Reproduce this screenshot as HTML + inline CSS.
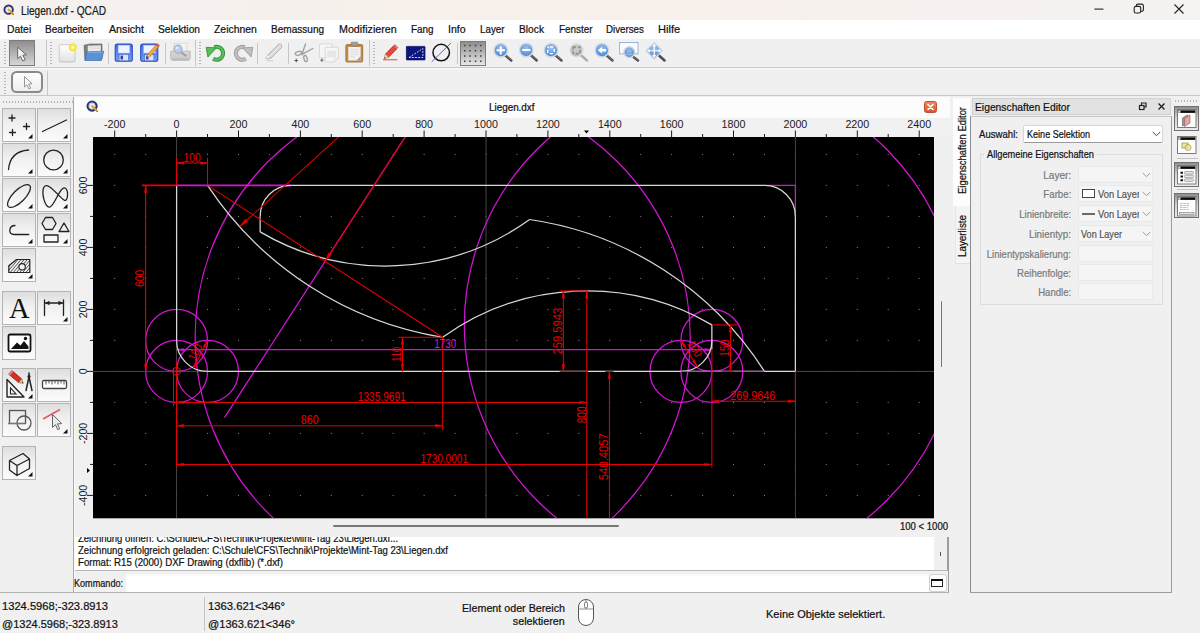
<!DOCTYPE html>
<html lang="de"><head><meta charset="utf-8"><title>Liegen.dxf - QCAD</title>
<style>
html,body{margin:0;padding:0}
body{width:1200px;height:633px;overflow:hidden;background:#f0f0f0;position:relative;font-family:"Liberation Sans",sans-serif;}
.t{position:absolute;white-space:nowrap;line-height:1;-webkit-text-stroke:0.22px currentColor;}
.b{position:absolute;box-sizing:border-box}
svg{position:absolute;overflow:visible}
svg text{font-family:"Liberation Sans",sans-serif}

.tb{background:#f0f0f0}
.btn{position:absolute;box-sizing:border-box;border:1px solid #b4b4b4;background:linear-gradient(#dedede,#f0f0f0 45%,#fbfbfb);}
.btn.on{background:linear-gradient(#c8c8c8,#f2f2f2);border-color:#8a8a8a}
.fld{position:absolute;box-sizing:border-box;border:1px solid #e9e9e9;background:#f5f5f5}

</style></head><body>
<div class="b" style="left:0px;top:0px;width:1200px;height:20px;background:linear-gradient(90deg,#f4f1ef,#f8f0ea 45%,#f5f2f1)"></div>
<span class="t " style="left:21.0px;transform-origin:left top;transform:scaleX(0.844);top:5.0px;font-size:12px;color:#1a1a1a;">Liegen.dxf - QCAD</span>
<svg style="left:1090px;top:0px" width="110" height="20" viewBox="0 0 110 20"><g fill="none" stroke="#222" stroke-width="1.1"><path d="M4.400 9.100h9"/><rect x="44.200" y="6.400" width="6.500" height="6.600" rx="1.600"/><path d="M46.300 6.300v-0.600a1.600 1.600 0 0 1 1.600 -1.600h3.600a1.900 1.900 0 0 1 1.900 1.900v3.700a1.600 1.600 0 0 1 -1.600 1.600h-0.900"/><path d="M84.500 4.500l9 9M93.500 4.500l-9 9"/></g></svg>
<div class="b" style="left:0px;top:20px;width:1200px;height:19px;background:#fff"></div>
<span class="t " style="left:7.3px;transform-origin:left top;transform:scaleX(0.942);top:23.9px;font-size:11px;color:#111;">Datei</span>
<span class="t " style="left:45.2px;transform-origin:left top;transform:scaleX(0.915);top:23.9px;font-size:11px;color:#111;">Bearbeiten</span>
<span class="t " style="left:108.5px;transform-origin:left top;transform:scaleX(0.970);top:23.9px;font-size:11px;color:#111;">Ansicht</span>
<span class="t " style="left:157.5px;transform-origin:left top;transform:scaleX(0.928);top:23.9px;font-size:11px;color:#111;">Selektion</span>
<span class="t " style="left:213.8px;transform-origin:left top;transform:scaleX(0.948);top:23.9px;font-size:11px;color:#111;">Zeichnen</span>
<span class="t " style="left:271.2px;transform-origin:left top;transform:scaleX(0.914);top:23.9px;font-size:11px;color:#111;">Bemassung</span>
<span class="t " style="left:338.6px;transform-origin:left top;transform:scaleX(0.973);top:23.9px;font-size:11px;color:#111;">Modifizieren</span>
<span class="t " style="left:410.8px;transform-origin:left top;transform:scaleX(0.897);top:23.9px;font-size:11px;color:#111;">Fang</span>
<span class="t " style="left:448.1px;transform-origin:left top;transform:scaleX(0.959);top:23.9px;font-size:11px;color:#111;">Info</span>
<span class="t " style="left:480.2px;transform-origin:left top;transform:scaleX(0.894);top:23.9px;font-size:11px;color:#111;">Layer</span>
<span class="t " style="left:519.0px;transform-origin:left top;transform:scaleX(0.929);top:23.9px;font-size:11px;color:#111;">Block</span>
<span class="t " style="left:558.5px;transform-origin:left top;transform:scaleX(0.901);top:23.9px;font-size:11px;color:#111;">Fenster</span>
<span class="t " style="left:606.0px;transform-origin:left top;transform:scaleX(0.886);top:23.9px;font-size:11px;color:#111;">Diverses</span>
<span class="t " style="left:657.8px;transform-origin:left top;transform:scaleX(1.009);top:23.9px;font-size:11px;color:#111;">Hilfe</span>
<div class="b" style="left:0px;top:39px;width:1200px;height:28.8px;background:#f0f0f0;border-bottom:1px solid #c8c8c8"></div>
<div class="b" style="left:0px;top:67.8px;width:1200px;height:28.7px;background:#f0f0f0;border-top:1px solid #fafafa;border-bottom:1px solid #c8c8c8"></div>
<div class="b" style="left:73px;top:96.5px;width:1px;height:496px;background:#a9a9a9"></div>
<div class="b" style="left:74px;top:98px;width:1px;height:495px;background:#fafafa"></div>
<div class="b" style="left:75px;top:97px;width:876px;height:439px;background:#f0f0f0"></div>
<div class="b" style="left:75px;top:97px;width:875px;height:21px;background:#fcfcfc"></div>
<span class="t " style="left:489.3px;transform-origin:left top;transform:scaleX(0.986);top:103.3px;font-size:10px;color:#111;">Liegen.dxf</span>
<div class="b" style="left:75px;top:118px;width:875px;height:19px;background:#f1f1f1"></div>
<div class="b" style="left:75px;top:118px;width:18px;height:400px;background:#f1f1f1"></div>
<div class="b" style="left:76px;top:518px;width:874px;height:18px;background:#f0f0f0"></div>
<div class="b" style="left:333px;top:525.2px;width:286px;height:1.6px;background:#777;border-radius:1px"></div>
<div class="b" style="left:940.5px;top:301px;width:1.6px;height:66px;background:#777;border-radius:1px"></div>
<span class="t " style="left:900.0px;transform-origin:left top;transform:scaleX(0.954);top:521.5px;font-size:10px;color:#111;">100 &lt; 1000</span>
<div class="b" style="left:75px;top:537px;width:859px;height:34px;background:#fff"></div>
<div class="b" style="left:934px;top:537px;width:14px;height:34px;background:#f0f0f0;border-right:1px solid #a0a0a0"></div>
<div class="b" style="left:940px;top:552px;width:1px;height:4px;background:#555"></div>
<div class="b" style="left:75px;top:570.4px;width:873px;height:1px;background:#b8b8b8"></div>
<div class="b" style="left:75px;top:537px;width:859px;height:34px;overflow:hidden"><span class="t " style="left:3.0px;transform-origin:left top;transform:scaleX(0.904);top:-4.3px;font-size:10.5px;color:#111;">Zeichnung öffnen: C:\Schule\CFS\Technik\Projekte\Mint-Tag 23\Liegen.dxf...</span></div>
<span class="t " style="left:78.0px;transform-origin:left top;transform:scaleX(0.912);top:544.6px;font-size:10.5px;color:#111;">Zeichnung erfolgreich geladen: C:\Schule\CFS\Technik\Projekte\Mint-Tag 23\Liegen.dxf</span>
<span class="t " style="left:78.0px;transform-origin:left top;transform:scaleX(0.922);top:556.6px;font-size:10.5px;color:#111;">Format: R15 (2000) DXF Drawing (dxflib) (*.dxf)</span>
<span class="t " style="left:74.0px;transform-origin:left top;transform:scaleX(0.866);top:578.1px;font-size:10.5px;color:#111;">Kommando:</span>
<div class="b" style="left:126px;top:574px;width:803px;height:17.5px;background:linear-gradient(#f6f6f6,#fff 3px)"></div>
<div class="b" style="left:929px;top:574px;width:17.5px;height:18px;background:#fdfdfd;border:1px solid #d0d0d0;border-radius:3px"></div>
<div class="b" style="left:931.3px;top:579px;width:12px;height:8px;border:1px solid #222;border-top:2.500px solid #111;background:#fff"></div>
<div class="b" style="left:947.5px;top:537px;width:1.5px;height:56px;background:#9c9c9c"></div>
<div class="b" style="left:0px;top:592.3px;width:949px;height:1.2px;background:#b0b0b0"></div>
<div class="b" style="left:0px;top:595px;width:1200px;height:38px;background:#f0f0f0"></div>
<span class="t " style="left:2.0px;transform-origin:left top;transform:scaleX(1.013);top:600.7px;font-size:11px;color:#111;">1324.5968;-323.8913</span>
<span class="t " style="left:2.0px;transform-origin:left top;top:618.7px;font-size:11px;color:#111;">@1324.5968;-323.8913</span>
<div class="b" style="left:204px;top:597px;width:1px;height:34px;background:#c4c4c4"></div>
<span class="t " style="left:208.0px;transform-origin:left top;transform:scaleX(1.026);top:600.7px;font-size:11px;color:#111;">1363.621&lt;346°</span>
<span class="t " style="left:208.0px;transform-origin:left top;transform:scaleX(1.009);top:618.7px;font-size:11px;color:#111;">@1363.621&lt;346°</span>
<span class="t " style="right:635.0px;transform-origin:right top;transform:scaleX(1.020);top:602.6px;font-size:10.5px;color:#111;">Element oder Bereich</span>
<span class="t " style="right:635.0px;transform-origin:right top;transform:scaleX(1.024);top:615.6px;font-size:10.5px;color:#111;">selektieren</span>
<svg style="left:577px;top:598px" width="18" height="30" viewBox="0 0 18 30"><rect x="1.5" y="1.5" width="15" height="26" rx="7.5" fill="#fff" stroke="#555" stroke-width="1"/><path d="M9 2v9M1.5 11h15" stroke="#777" fill="none" stroke-width="0.8"/><rect x="7.5" y="4" width="3" height="6" rx="1.5" fill="#fff" stroke="#555" stroke-width="0.8"/></svg>
<span class="t " style="left:766.0px;transform-origin:left top;top:608.7px;font-size:11px;color:#111;">Keine Objekte selektiert.</span>
<div class="b" style="left:953.4px;top:98px;width:17px;height:107.5px;background:#fdfdfd"></div>
<div class="b" style="left:955px;top:206px;width:15.5px;height:57.5px;background:#f4f4f4;border-bottom:1px solid #e0e0e0;border-left:1px solid #e6e6e6"></div>
<span class="t" style="left:956.500px;top:194px;font-size:10.5px;color:#111;transform-origin:left top;transform:rotate(-90deg) scaleX(0.898)">Eigenschaften Editor</span>
<span class="t" style="left:956.500px;top:257px;font-size:10.5px;color:#111;transform-origin:left top;transform:rotate(-90deg) scaleX(0.935)">Layerliste</span>
<div class="b" style="left:972px;top:98px;width:199px;height:17px;background:#e2e2e2;border:1px solid #d2d2d2"></div>
<span class="t " style="left:975.0px;transform-origin:left top;transform:scaleX(0.936);top:101.7px;font-size:11px;color:#111;">Eigenschaften Editor</span>
<svg style="left:1138px;top:101px" width="30" height="11" viewBox="0 0 30 11"><g fill="none" stroke="#222" stroke-width="1.2"><rect x="1.5" y="4.5" width="4.5" height="4"/><path d="M3.5 4v-2h4.5v4h-2"/><path d="M20.5 2.5l6 6M26.5 2.5l-6 6" stroke-width="1.4"/></g></svg>
<div class="b" style="left:970px;top:116px;width:202px;height:477.3px;border:1px solid #9c9c9c;border-left:1.500px solid #8c8c8c;border-top-color:#c8c8c8;background:#f0f0f0"></div>
<span class="t " style="left:979.0px;transform-origin:left top;transform:scaleX(0.915);top:129.1px;font-size:10.5px;color:#111;">Auswahl:</span>
<div class="b" style="left:1023px;top:125px;width:140px;height:18px;background:#fff;border:1px solid #d6d6d6;border-bottom-color:#9a9a9a;border-radius:2px"></div>
<span class="t " style="left:1027.0px;transform-origin:left top;transform:scaleX(0.863);top:129.1px;font-size:10.5px;color:#111;">Keine Selektion</span>
<svg style="left:1152px;top:131px" width="9" height="6" viewBox="0 0 9 6"><path d="M0.8 1l3.7 3.7L8.2 1" fill="none" stroke="#444" stroke-width="1"/></svg>
<div class="b" style="left:980px;top:154px;width:183px;height:151px;border:1px solid #dcdcdc"></div>
<div class="b" style="left:984px;top:148px;width:113px;height:12px;background:#f0f0f0"></div>
<span class="t " style="left:987.0px;transform-origin:left top;transform:scaleX(0.881);top:149.1px;font-size:10.5px;color:#111;">Allgemeine Eigenschaften</span>
<span class="t " style="right:129.0px;transform-origin:right top;transform:scaleX(0.959);top:170.1px;font-size:10.5px;color:#7a7a7a;">Layer:</span>
<div class="fld" style="left:1078px;top:166px;width:75px;height:17px"></div>
<svg style="left:1142px;top:172px" width="9" height="6" viewBox="0 0 9 6"><path d="M0.8 1l3.7 3.7L8.2 1" fill="none" stroke="#9a9a9a" stroke-width="1"/></svg>
<span class="t " style="right:129.0px;transform-origin:right top;transform:scaleX(0.923);top:189.1px;font-size:10.5px;color:#7a7a7a;">Farbe:</span>
<div class="fld" style="left:1078px;top:185px;width:75px;height:17px"></div>
<svg style="left:1142px;top:191px" width="9" height="6" viewBox="0 0 9 6"><path d="M0.8 1l3.7 3.7L8.2 1" fill="none" stroke="#9a9a9a" stroke-width="1"/></svg>
<span class="t " style="right:129.0px;transform-origin:right top;transform:scaleX(0.909);top:209.1px;font-size:10.5px;color:#7a7a7a;">Linienbreite:</span>
<div class="fld" style="left:1078px;top:205px;width:75px;height:17px"></div>
<svg style="left:1142px;top:211px" width="9" height="6" viewBox="0 0 9 6"><path d="M0.8 1l3.7 3.7L8.2 1" fill="none" stroke="#9a9a9a" stroke-width="1"/></svg>
<span class="t " style="right:129.0px;transform-origin:right top;transform:scaleX(0.934);top:229.1px;font-size:10.5px;color:#7a7a7a;">Linientyp:</span>
<div class="fld" style="left:1078px;top:225px;width:75px;height:17px"></div>
<svg style="left:1142px;top:231px" width="9" height="6" viewBox="0 0 9 6"><path d="M0.8 1l3.7 3.7L8.2 1" fill="none" stroke="#9a9a9a" stroke-width="1"/></svg>
<span class="t " style="right:129.0px;transform-origin:right top;transform:scaleX(0.905);top:249.1px;font-size:10.5px;color:#7a7a7a;">Linientypskalierung:</span>
<div class="fld" style="left:1078px;top:245px;width:75px;height:17px"></div>
<span class="t " style="right:129.0px;transform-origin:right top;transform:scaleX(0.916);top:268.1px;font-size:10.5px;color:#7a7a7a;">Reihenfolge:</span>
<div class="fld" style="left:1078px;top:264px;width:75px;height:17px"></div>
<span class="t " style="right:129.0px;transform-origin:right top;transform:scaleX(0.912);top:287.1px;font-size:10.5px;color:#7a7a7a;">Handle:</span>
<div class="fld" style="left:1078px;top:283px;width:75px;height:17px"></div>
<div class="b" style="left:1082px;top:189px;width:13px;height:9px;border:1px solid #444;background:#fff"></div>
<span class="t " style="left:1098.0px;transform-origin:left top;transform:scaleX(0.888);top:189.1px;font-size:10.5px;color:#555;">Von Layer</span>
<div class="b" style="left:1138.5px;top:187px;width:3px;height:13px;background:#f5f5f5"></div>
<div class="b" style="left:1082px;top:213px;width:13px;height:2px;background:#6a6a6a"></div>
<span class="t " style="left:1098.0px;transform-origin:left top;transform:scaleX(0.888);top:209.1px;font-size:10.5px;color:#555;">Von Layer</span>
<div class="b" style="left:1138.5px;top:207px;width:3px;height:13px;background:#f5f5f5"></div>
<span class="t " style="left:1081.0px;transform-origin:left top;transform:scaleX(0.867);top:229.1px;font-size:10.5px;color:#555;">Von Layer</span>
<svg style="left:0;top:0" width="1200" height="633" viewBox="0 0 1200 633">
<defs><clipPath id="cc"><rect x="93" y="137" width="841" height="381.29999999999995"/></clipPath><pattern id="grid" x="-133.30" y="60.90" width="30.940" height="31" patternUnits="userSpaceOnUse"><rect x="0" y="0" width="1" height="1" fill="#8a8a8a"/></pattern></defs>
<rect x="93" y="137" width="841" height="381.29999999999995" fill="#000"/>
<g clip-path="url(#cc)" fill="none" stroke-linecap="butt">
<rect x="93" y="137" width="841" height="381.29999999999995" fill="url(#grid)"/>
<path d="M176.60 137V518.3" stroke="#474747" stroke-width="1"/>
<path d="M486.00 137V518.3" stroke="#474747" stroke-width="1"/>
<path d="M795.40 137V518.3" stroke="#474747" stroke-width="1"/>
<path d="M93 371.4H934" stroke="#474747" stroke-width="1"/>
<ellipse cx="442.68" cy="337.30" rx="247.52" ry="248.00" stroke="#d414d4" stroke-width="1.25"/>
<ellipse cx="711.86" cy="324.90" rx="247.52" ry="248.00" stroke="#d414d4" stroke-width="1.25"/>
<ellipse cx="176.60" cy="340.40" rx="30.94" ry="31.00" stroke="#d414d4" stroke-width="1.25"/>
<ellipse cx="176.60" cy="371.40" rx="30.94" ry="31.00" stroke="#d414d4" stroke-width="1.25"/>
<ellipse cx="207.54" cy="371.40" rx="30.94" ry="31.00" stroke="#d414d4" stroke-width="1.25"/>
<ellipse cx="711.86" cy="340.40" rx="30.94" ry="31.00" stroke="#d414d4" stroke-width="1.25"/>
<ellipse cx="711.86" cy="371.40" rx="30.94" ry="31.00" stroke="#d414d4" stroke-width="1.25"/>
<ellipse cx="680.92" cy="371.40" rx="30.94" ry="31.00" stroke="#d414d4" stroke-width="1.25"/>
<path d="M176.60 185.40L291.08 185.40" stroke="#d414d4" stroke-width="1.7"/>
<path d="M764.46 185.40L795.40 185.40" stroke="#d414d4" stroke-width="1.25"/>
<path d="M795.40 185.40L795.40 216.40" stroke="#d414d4" stroke-width="1.25"/>
<path d="M224.52 417.68L498.38 -7.92" stroke="#d414d4" stroke-width="1.25"/>
<path d="M176.60 349.70L711.86 349.70" stroke="#d414d4" stroke-width="1.25"/>
<path d="M176.60 349.70L183.80 348.45L183.80 350.95Z" fill="#d414d4" stroke="#d414d4" stroke-width="0.5"/>
<path d="M711.86 349.70L704.66 350.95L704.66 348.45Z" fill="#d414d4" stroke="#d414d4" stroke-width="0.5"/>
<path d="M176.60 185.40L176.60 340.40" stroke="#d8d8d8" stroke-width="1.25"/>
<path d="M176.60 340.40A30.94 31.00 0 0 0 207.54 371.40" stroke="#d8d8d8" stroke-width="1.25"/>
<path d="M207.54 371.40L795.40 371.40" stroke="#d8d8d8" stroke-width="1.25"/>
<path d="M795.40 371.40L795.40 216.40" stroke="#d8d8d8" stroke-width="1.25"/>
<path d="M795.40 216.40A30.94 31.00 0 0 0 764.46 185.40" stroke="#d8d8d8" stroke-width="1.25"/>
<path d="M764.46 185.40L291.08 185.40" stroke="#d8d8d8" stroke-width="1.25"/>
<path d="M291.08 185.40A30.94 31.00 0 0 0 260.14 216.40" stroke="#d8d8d8" stroke-width="1.25"/>
<path d="M260.14 216.40L260.14 231.90" stroke="#d8d8d8" stroke-width="1.25"/>
<path d="M260.15 231.88A247.52 248.00 0 0 0 529.66 219.55" stroke="#d8d8d8" stroke-width="1.25"/>
<path d="M764.46 371.40A335.64 336.29 0 0 0 529.63 219.50" stroke="#d8d8d8" stroke-width="1.25"/>
<path d="M207.54 185.40A349.02 349.70 0 0 0 442.68 337.30" stroke="#d8d8d8" stroke-width="1.25"/>
<path d="M711.86 324.90A247.52 248.00 0 0 0 442.68 337.30" stroke="#d8d8d8" stroke-width="1.25"/>
<path d="M711.86 324.90L711.86 349.08" stroke="#d8d8d8" stroke-width="1.25"/>
<path d="M680.92 371.40A30.94 31.00 0 0 0 711.86 340.40" stroke="#d8d8d8" stroke-width="1.25"/>
<path d="M680.92 371.40L764.46 371.40" stroke="#d414d4" stroke-width="1"/>
<path d="M207.54 185.40L442.68 337.30" stroke="#e80000" stroke-width="1.05"/>
<path d="M498.38 -7.92L325.11 261.35" stroke="#e80000" stroke-width="1.05"/>
<path d="M325.11 261.35L328.48 252.81L331.50 254.76Z" fill="#e80000" stroke="#e80000" stroke-width="0.5"/>
<path d="M498.38 -7.92L240.03 226.32" stroke="#e80000" stroke-width="1.05"/>
<path d="M240.03 226.32L245.49 218.95L247.91 221.62Z" fill="#e80000" stroke="#e80000" stroke-width="0.5"/>
<path d="M176.60 185.40L176.60 157.81" stroke="#e80000" stroke-width="1.05"/>
<path d="M207.54 185.40L207.54 157.81" stroke="#e80000" stroke-width="1.05"/>
<path d="M176.60 163.08L207.54 163.08" stroke="#e80000" stroke-width="1.05"/>
<path d="M176.60 163.08L183.80 161.83L183.80 164.33Z" fill="#e80000" stroke="#e80000" stroke-width="0.5"/>
<path d="M207.54 163.08L200.34 164.33L200.34 161.83Z" fill="#e80000" stroke="#e80000" stroke-width="0.5"/>
<text x="0" y="0" transform="translate(192.07 161.53) rotate(0)" text-anchor="middle" font-size="12" fill="#e80000" stroke="none" textLength="17" lengthAdjust="spacingAndGlyphs">100</text>
<path d="M141.95 185.40L176.60 185.40" stroke="#e80000" stroke-width="1.6"/>
<path d="M141.95 371.40L176.60 371.40" stroke="#e80000" stroke-width="1.05"/>
<path d="M145.66 185.40L145.66 371.40" stroke="#e80000" stroke-width="1.05"/>
<path d="M145.66 185.40L146.91 192.60L144.41 192.60Z" fill="#e80000" stroke="#e80000" stroke-width="0.5"/>
<path d="M145.66 371.40L144.41 364.20L146.91 364.20Z" fill="#e80000" stroke="#e80000" stroke-width="0.5"/>
<text x="0" y="0" transform="translate(144.11 278.40) rotate(-90)" text-anchor="middle" font-size="12" fill="#e80000" stroke="none" textLength="17" lengthAdjust="spacingAndGlyphs">600</text>
<path d="M176.60 362.10L176.60 467.50" stroke="#e80000" stroke-width="1.05"/>
<path d="M173.51 368.30L173.51 406.12" stroke="#e80000" stroke-width="1.05"/>
<circle cx="176.6" cy="371.4" r="4" stroke="#a03020" stroke-width="1"/>
<path d="M207.54 340.40L193.49 368.02" stroke="#e80000" stroke-width="1.05"/>
<path d="M193.49 368.02L195.65 361.04L197.88 362.17Z" fill="#e80000" stroke="#e80000" stroke-width="0.5"/>
<path d="M207.54 340.40L205.39 347.38L203.16 346.25Z" fill="#e80000" stroke="#e80000" stroke-width="0.5"/>
<text x="0" y="0" transform="translate(198.88 354.04) rotate(-63)" text-anchor="middle" font-size="12" fill="#e80000" stroke="none" textLength="17" lengthAdjust="spacingAndGlyphs">100</text>
<path d="M680.92 340.40L697.32 366.69" stroke="#e80000" stroke-width="1.05"/>
<path d="M697.32 366.69L692.44 361.25L694.56 359.92Z" fill="#e80000" stroke="#e80000" stroke-width="0.5"/>
<path d="M680.92 340.40L685.80 345.84L683.68 347.17Z" fill="#e80000" stroke="#e80000" stroke-width="0.5"/>
<text x="0" y="0" transform="translate(691.13 350.94) rotate(58)" text-anchor="middle" font-size="12" fill="#e80000" stroke="none" textLength="17" lengthAdjust="spacingAndGlyphs">100</text>
<path d="M398.75 337.30L442.68 337.30" stroke="#e80000" stroke-width="1.05"/>
<path d="M402.46 337.30L402.46 371.40" stroke="#e80000" stroke-width="1.05"/>
<path d="M402.46 337.30L403.71 344.50L401.21 344.50Z" fill="#e80000" stroke="#e80000" stroke-width="0.5"/>
<path d="M402.46 371.40L401.21 364.20L403.71 364.20Z" fill="#e80000" stroke="#e80000" stroke-width="0.5"/>
<text x="0" y="0" transform="translate(401.22 354.35) rotate(-90)" text-anchor="middle" font-size="12" fill="#e80000" stroke="none" textLength="15" lengthAdjust="spacingAndGlyphs">110</text>
<path d="M173.51 402.40L586.80 402.40" stroke="#e80000" stroke-width="1.05"/>
<path d="M176.60 402.40L183.80 401.15L183.80 403.65Z" fill="#e80000" stroke="#e80000" stroke-width="0.5"/>
<path d="M586.80 402.40L579.60 403.65L579.60 401.15Z" fill="#e80000" stroke="#e80000" stroke-width="0.5"/>
<text x="0" y="0" transform="translate(381.73 400.85) rotate(0)" text-anchor="middle" font-size="12" fill="#e80000" stroke="none" textLength="48" lengthAdjust="spacingAndGlyphs">1335.9691</text>
<path d="M442.68 337.30L442.68 430.30" stroke="#e80000" stroke-width="1.05"/>
<path d="M176.60 425.65L442.68 425.65" stroke="#e80000" stroke-width="1.05"/>
<path d="M176.60 425.65L183.80 424.40L183.80 426.90Z" fill="#e80000" stroke="#e80000" stroke-width="0.5"/>
<path d="M442.68 425.65L435.48 426.90L435.48 424.40Z" fill="#e80000" stroke="#e80000" stroke-width="0.5"/>
<text x="0" y="0" transform="translate(309.64 424.10) rotate(0)" text-anchor="middle" font-size="12" fill="#e80000" stroke="none" textLength="18" lengthAdjust="spacingAndGlyphs">860</text>
<path d="M711.86 349.08L711.86 467.50" stroke="#e80000" stroke-width="1.05"/>
<path d="M176.60 464.40L711.86 464.40" stroke="#e80000" stroke-width="1.05"/>
<path d="M176.60 464.40L183.80 463.15L183.80 465.65Z" fill="#e80000" stroke="#e80000" stroke-width="0.5"/>
<path d="M711.86 464.40L704.66 465.65L704.66 463.15Z" fill="#e80000" stroke="#e80000" stroke-width="0.5"/>
<text x="0" y="0" transform="translate(444.23 462.85) rotate(0)" text-anchor="middle" font-size="12" fill="#e80000" stroke="none" textLength="47.5" lengthAdjust="spacingAndGlyphs">1730.0001</text>
<path d="M559.64 290.92L588.10 290.92" stroke="#e80000" stroke-width="1.05"/>
<path d="M559.64 371.40L588.10 371.40" stroke="#e80000" stroke-width="1.05"/>
<path d="M563.35 290.92L563.35 371.40" stroke="#e80000" stroke-width="1.05"/>
<path d="M563.35 290.92L564.60 298.12L562.10 298.12Z" fill="#e80000" stroke="#e80000" stroke-width="0.5"/>
<path d="M563.35 371.40L562.10 364.20L564.60 364.20Z" fill="#e80000" stroke="#e80000" stroke-width="0.5"/>
<text x="0" y="0" transform="translate(562.11 331.10) rotate(-90)" text-anchor="middle" font-size="12" fill="#e80000" stroke="none" textLength="47" lengthAdjust="spacingAndGlyphs">259.5943</text>
<path d="M586.80 290.92L586.80 538.80" stroke="#e80000" stroke-width="1.05"/>
<path d="M586.80 290.92L588.05 298.12L585.55 298.12Z" fill="#e80000" stroke="#e80000" stroke-width="0.5"/>
<text x="0" y="0" transform="translate(585.63 414.80) rotate(-90)" text-anchor="middle" font-size="12" fill="#e80000" stroke="none" textLength="17" lengthAdjust="spacingAndGlyphs">800</text>
<path d="M609.45 371.40L609.45 538.80" stroke="#e80000" stroke-width="1.05"/>
<path d="M609.45 371.40L610.70 378.60L608.20 378.60Z" fill="#e80000" stroke="#e80000" stroke-width="0.5"/>
<path d="M605.12 371.40L613.47 371.40" stroke="#e80000" stroke-width="1.05"/>
<text x="0" y="0" transform="translate(608.21 456.65) rotate(-90)" text-anchor="middle" font-size="12" fill="#e80000" stroke="none" textLength="47" lengthAdjust="spacingAndGlyphs">540.4057</text>
<path d="M711.86 324.90L737.23 324.90" stroke="#e80000" stroke-width="1.05"/>
<path d="M722.69 371.40L734.14 371.40" stroke="#e80000" stroke-width="1.05"/>
<path d="M730.43 324.90L730.43 371.40" stroke="#e80000" stroke-width="1.05"/>
<path d="M730.43 324.90L731.68 332.10L729.18 332.10Z" fill="#e80000" stroke="#e80000" stroke-width="0.5"/>
<path d="M730.43 371.40L729.18 364.20L731.68 364.20Z" fill="#e80000" stroke="#e80000" stroke-width="0.5"/>
<text x="0" y="0" transform="translate(729.19 348.15) rotate(-90)" text-anchor="middle" font-size="12" fill="#e80000" stroke="none" textLength="17" lengthAdjust="spacingAndGlyphs">150</text>
<path d="M795.40 371.40L795.40 404.26" stroke="#e80000" stroke-width="1.05"/>
<path d="M711.86 401.16L795.40 401.16" stroke="#e80000" stroke-width="1.05"/>
<path d="M711.86 401.16L719.06 399.91L719.06 402.41Z" fill="#e80000" stroke="#e80000" stroke-width="0.5"/>
<path d="M795.40 401.16L788.20 402.41L788.20 399.91Z" fill="#e80000" stroke="#e80000" stroke-width="0.5"/>
<text x="0" y="0" transform="translate(752.70 399.61) rotate(0)" text-anchor="middle" font-size="12" fill="#e80000" stroke="none" textLength="45" lengthAdjust="spacingAndGlyphs">269.9646</text>
<text x="0" y="0" transform="translate(445.16 347.84) rotate(0)" text-anchor="middle" font-size="12" fill="#d414d4" stroke="none" textLength="22" lengthAdjust="spacingAndGlyphs">1730</text>
</g>
<g font-size="10.7" fill="#1a1a1a" stroke="#1a1a1a">
<path d="M114.7 130.5V137" stroke-width="1"/>
<text x="114.7" y="128.3" text-anchor="middle" stroke="none">-200</text>
<path d="M145.7 134V137" stroke-width="1"/>
<path d="M176.6 130.5V137" stroke-width="1"/>
<text x="176.6" y="128.3" text-anchor="middle" stroke="none">0</text>
<path d="M207.5 134V137" stroke-width="1"/>
<path d="M238.5 130.5V137" stroke-width="1"/>
<text x="238.5" y="128.3" text-anchor="middle" stroke="none">200</text>
<path d="M269.4 134V137" stroke-width="1"/>
<path d="M300.4 130.5V137" stroke-width="1"/>
<text x="300.4" y="128.3" text-anchor="middle" stroke="none">400</text>
<path d="M331.3 134V137" stroke-width="1"/>
<path d="M362.2 130.5V137" stroke-width="1"/>
<text x="362.2" y="128.3" text-anchor="middle" stroke="none">600</text>
<path d="M393.2 134V137" stroke-width="1"/>
<path d="M424.1 130.5V137" stroke-width="1"/>
<text x="424.1" y="128.3" text-anchor="middle" stroke="none">800</text>
<path d="M455.1 134V137" stroke-width="1"/>
<path d="M486.0 130.5V137" stroke-width="1"/>
<text x="486.0" y="128.3" text-anchor="middle" stroke="none">1000</text>
<path d="M516.9 134V137" stroke-width="1"/>
<path d="M547.9 130.5V137" stroke-width="1"/>
<text x="547.9" y="128.3" text-anchor="middle" stroke="none">1200</text>
<path d="M578.8 134V137" stroke-width="1"/>
<path d="M609.8 130.5V137" stroke-width="1"/>
<text x="609.8" y="128.3" text-anchor="middle" stroke="none">1400</text>
<path d="M640.7 134V137" stroke-width="1"/>
<path d="M671.6 130.5V137" stroke-width="1"/>
<text x="671.6" y="128.3" text-anchor="middle" stroke="none">1600</text>
<path d="M702.6 134V137" stroke-width="1"/>
<path d="M733.5 130.5V137" stroke-width="1"/>
<text x="733.5" y="128.3" text-anchor="middle" stroke="none">1800</text>
<path d="M764.5 134V137" stroke-width="1"/>
<path d="M795.4 130.5V137" stroke-width="1"/>
<text x="795.4" y="128.3" text-anchor="middle" stroke="none">2000</text>
<path d="M826.3 134V137" stroke-width="1"/>
<path d="M857.3 130.5V137" stroke-width="1"/>
<text x="857.3" y="128.3" text-anchor="middle" stroke="none">2200</text>
<path d="M888.2 134V137" stroke-width="1"/>
<path d="M919.2 130.5V137" stroke-width="1"/>
<text x="919.2" y="128.3" text-anchor="middle" stroke="none">2400</text>
<path d="M87 495.4H93" stroke-width="1"/>
<text transform="translate(86.5 495.4) rotate(-90)" text-anchor="middle" stroke="none">-400</text>
<path d="M90 464.4H93" stroke-width="1"/>
<path d="M87 433.4H93" stroke-width="1"/>
<text transform="translate(86.5 433.4) rotate(-90)" text-anchor="middle" stroke="none">-200</text>
<path d="M90 402.4H93" stroke-width="1"/>
<path d="M87 371.4H93" stroke-width="1"/>
<text transform="translate(86.5 371.4) rotate(-90)" text-anchor="middle" stroke="none">0</text>
<path d="M90 340.4H93" stroke-width="1"/>
<path d="M87 309.4H93" stroke-width="1"/>
<text transform="translate(86.5 309.4) rotate(-90)" text-anchor="middle" stroke="none">200</text>
<path d="M90 278.4H93" stroke-width="1"/>
<path d="M87 247.4H93" stroke-width="1"/>
<text transform="translate(86.5 247.4) rotate(-90)" text-anchor="middle" stroke="none">400</text>
<path d="M90 216.4H93" stroke-width="1"/>
<path d="M87 185.4H93" stroke-width="1"/>
<text transform="translate(86.5 185.4) rotate(-90)" text-anchor="middle" stroke="none">600</text>
<path d="M584 130.5h5l-2.5 3z" stroke="none" fill="#000"/>
<path d="M87 468v5l3 -2.5z" stroke="none" fill="#000"/>
</g>
</svg>
<svg style="left:3px;top:3.8px" width="12" height="12" viewBox="0 0 16 16"><circle cx="7.5" cy="7.5" r="5.6" fill="#f4f4f4" stroke="#27346f" stroke-width="2.6"/><circle cx="7.5" cy="7.5" r="3.6" fill="#fff" stroke="#9aa3c4" stroke-width="0.8"/><path d="M8.600 8.600l4.800 4.800" stroke="#e8a21c" stroke-width="2.400" stroke-linecap="round"/><circle cx="13.700" cy="13.700" r="0.900" fill="#d8402a"/><path d="M5.5 7.5h4M7.5 5.5v4" stroke="#c07a30" stroke-width="0.7"/></svg>
<svg style="left:85.5px;top:100.3px" width="13" height="13" viewBox="0 0 16 16"><circle cx="7.5" cy="7.5" r="5.6" fill="#f4f4f4" stroke="#27346f" stroke-width="2.6"/><circle cx="7.5" cy="7.5" r="3.6" fill="#fff" stroke="#9aa3c4" stroke-width="0.8"/><path d="M8.600 8.600l4.800 4.800" stroke="#e8a21c" stroke-width="2.400" stroke-linecap="round"/><circle cx="13.700" cy="13.700" r="0.900" fill="#d8402a"/><path d="M5.5 7.5h4M7.5 5.5v4" stroke="#c07a30" stroke-width="0.7"/></svg>
<div class="b" style="left:924px;top:101px;width:13px;height:12px;background:linear-gradient(#f08a6a,#d9532f);border:1px solid #c44a2a;border-radius:2.5px"></div>
<svg style="left:924px;top:101px" width="13" height="12" viewBox="0 0 13 12"><path d="M4 3.5l5 5M9 3.5l-5 5" stroke="#fff" stroke-width="1.6" stroke-linecap="round"/></svg>
<div class="b" style="left:4px;top:42px;width:2px;height:23px;background:repeating-linear-gradient(#b4b4b4 0 1px,transparent 1px 3px)"></div>
<div class="btn on" style="left:9px;top:40px;width:26px;height:26px;background:linear-gradient(#8e8e8e,#d6d6d6);border-color:#7c7c7c"></div>
<div class="b" style="left:46px;top:40px;width:1px;height:26px;background:#c6c6c6"></div>
<div class="b" style="left:50px;top:42px;width:2px;height:23px;background:repeating-linear-gradient(#b4b4b4 0 1px,transparent 1px 3px)"></div>
<div class="b" style="left:108px;top:43px;width:1px;height:21px;background:#c6c6c6"></div>
<div class="b" style="left:165px;top:43px;width:1px;height:21px;background:#c6c6c6"></div>
<div class="b" style="left:194.5px;top:40px;width:1px;height:26px;background:#c6c6c6"></div>
<div class="b" style="left:199px;top:42px;width:2px;height:23px;background:repeating-linear-gradient(#b4b4b4 0 1px,transparent 1px 3px)"></div>
<div class="b" style="left:257px;top:43px;width:1px;height:21px;background:#c6c6c6"></div>
<div class="b" style="left:288px;top:43px;width:1px;height:21px;background:#c6c6c6"></div>
<div class="b" style="left:369px;top:40px;width:1px;height:26px;background:#c6c6c6"></div>
<div class="b" style="left:373px;top:42px;width:2px;height:23px;background:repeating-linear-gradient(#b4b4b4 0 1px,transparent 1px 3px)"></div>
<div class="b" style="left:456.5px;top:43px;width:1px;height:21px;background:#c6c6c6"></div>
<div class="btn on" style="left:460px;top:40.500px;width:25.500px;height:25.500px;background:linear-gradient(#8e8e8e,#e6e6e6);border-color:#7c7c7c"></div>
<svg style="left:0;top:0" width="1200" height="70" viewBox="0 0 1200 70"><defs><linearGradient id="pg" x1="0" y1="0" x2="0" y2="1"><stop offset="0" stop-color="#ffffff"/><stop offset="1" stop-color="#e2e2e2"/></linearGradient><radialGradient id="lens" cx="0.5" cy="0.35" r="0.7"><stop offset="0" stop-color="#9cc3ee"/><stop offset="1" stop-color="#3f7fd0"/></radialGradient><radialGradient id="lensg" cx="0.5" cy="0.35" r="0.7"><stop offset="0" stop-color="#d8d8d8"/><stop offset="1" stop-color="#a8a8a8"/></radialGradient><linearGradient id="flp" x1="0" y1="0" x2="0" y2="1"><stop offset="0" stop-color="#3f6fe6"/><stop offset="1" stop-color="#6f9cf2"/></linearGradient><radialGradient id="sun"><stop offset="0" stop-color="#ffffe0"/><stop offset="0.35" stop-color="#fff27a"/><stop offset="1" stop-color="#eedd22"/></radialGradient></defs><g transform="translate(0 38) scale(0.15)"><path d="M118 62V138L136 121L152 153L168 145L152 114L176 112Z" fill="#f4f4f4" stroke="#5a5a5a" stroke-width="6" stroke-linejoin="round"/></g><g transform="translate(0 38) scale(0.15)"><rect x="395" y="45" width="105" height="113" rx="4" fill="url(#pg)" stroke="#bdbdbd" stroke-width="5"/><path d="M398 162h100" stroke="#d0d0d0" stroke-width="4"/><circle cx="485" cy="62" r="26" fill="url(#sun)"/></g><g transform="translate(0 38) scale(0.15)"><path d="M560 48L600 40L680 40L680 140L566 146Z" fill="#7d7d7d" stroke="#5c5c5c" stroke-width="4"/><path d="M585 52L672 48L672 100L585 104Z" fill="#efefef"/><path d="M592 62L668 58M592 74L668 70" stroke="#c8c8c8" stroke-width="4"/><path d="M578 92L692 88L676 150L566 150Z" fill="#5b90d4" stroke="#2f65ad" stroke-width="4" stroke-linejoin="round"/><path d="M584 98L686 94" stroke="#9cc3ee" stroke-width="4"/></g><g transform="translate(0 38) scale(0.15)"><rect x="768" y="40" width="114" height="115" rx="14" fill="url(#flp)" stroke="#2a48c4" stroke-width="7"/><rect x="788" y="48" width="76" height="52" fill="#eef3ff" stroke="#b4c8f4" stroke-width="3"/><rect x="794" y="110" width="62" height="42" fill="#d9e4fb" stroke="#3150b4" stroke-width="3"/><rect x="804" y="117" width="16" height="26" fill="#2a40a0"/></g><g transform="translate(0 38) scale(0.15)"><rect x="938" y="40" width="114" height="115" rx="14" fill="url(#flp)" stroke="#2a48c4" stroke-width="7"/><rect x="958" y="48" width="76" height="52" fill="#eef3ff" stroke="#b4c8f4" stroke-width="3"/><rect x="964" y="110" width="62" height="42" fill="#d9e4fb" stroke="#3150b4" stroke-width="3"/><rect x="974" y="117" width="16" height="26" fill="#2a40a0"/><g transform="translate(1022 82) rotate(-49)"><rect x="-42" y="-11" width="80" height="22" fill="#f5a83a" stroke="#b06a1c" stroke-width="3"/><path d="M-42 -11L-64 0L-42 11Z" fill="#f6dcb0" stroke="#b06a1c" stroke-width="3"/><path d="M-56 -4L-64 0L-56 4Z" fill="#333"/><rect x="38" y="-11" width="14" height="22" rx="4" fill="#e86a5c" stroke="#a8483c" stroke-width="3"/></g></g><g transform="translate(160 38) scale(0.15)"><g opacity="0.85"><path d="M95 35h85v60h-85z" fill="#f4f4f4" stroke="#c4c4c4" stroke-width="4"/><path d="M70 88h132v50h-132z" fill="#c9c9c9" stroke="#a2a2a2" stroke-width="4"/><path d="M76 138h120v14h-120z" fill="#b2b2b2"/><path d="M84 100h104" stroke="#e4e4e4" stroke-width="5"/><path d="M140 95L172 118" stroke="#8f8f8f" stroke-width="12" stroke-linecap="round"/><circle cx="120" cy="75" r="27" fill="#a9c8ee" stroke="#9aa8bb" stroke-width="8"/><circle cx="113" cy="67" r="10" fill="#dcebfb"/></g></g><g transform="translate(195 38) scale(0.15)"><path d="M128 62A43 43 0 1 1 121 138" fill="none" stroke="#2f9438" stroke-width="27"/><path d="M128 62A43 43 0 1 1 121 138" fill="none" stroke="#5cbc5e" stroke-width="15"/><path d="M75 62L142 66L86 127Z" fill="#5cbc5e" stroke="#2f9438" stroke-width="6" stroke-linejoin="round"/></g><g transform="translate(195 38) scale(0.15)"><g transform="translate(460 0) scale(-1 1)"><path d="M128 62A43 43 0 1 1 121 138" fill="none" stroke="#9c9c9c" stroke-width="27"/><path d="M128 62A43 43 0 1 1 121 138" fill="none" stroke="#c0c0c0" stroke-width="15"/><path d="M75 62L142 66L86 127Z" fill="#c0c0c0" stroke="#9c9c9c" stroke-width="6" stroke-linejoin="round"/></g></g><g transform="translate(195 38) scale(0.15)"><path d="M565 55L498 122" stroke="#a9a9a9" stroke-width="34" stroke-linecap="round"/><path d="M565 55L498 122" stroke="#e0e0e0" stroke-width="24" stroke-linecap="round"/><path d="M470 128L494 152" stroke="#bdbdbd" stroke-width="5"/><path d="M484 110L472 140L504 132Z" fill="#f4f4f4" stroke="#bcbcbc" stroke-width="4"/><path d="M478 152h44" stroke="#c4c4c4" stroke-width="5"/></g><g transform="translate(195 38) scale(0.15)"><g fill="none" stroke="#a0a0a0" stroke-width="9" stroke-linecap="round"><path d="M737 40L712 112"/><path d="M785 70L716 108"/><ellipse cx="690" cy="102" rx="22" ry="12" transform="rotate(-15 690 102)"/><ellipse cx="737" cy="137" rx="11" ry="21" transform="rotate(-15 737 137)"/></g><path d="M663 150h24M675 138v24" stroke="#4a4a4a" stroke-width="6"/></g><g transform="translate(195 38) scale(0.15)"><g fill="#f6f6f6" stroke="#d2d2d2" stroke-width="5"><path d="M830 40h85v92h-85z"/><path d="M868 62h88v72l-26 26h-62z"/></g><path d="M882 84h60v44h-60z" fill="#e6e6e6"/><path d="M956 134h-26v26" fill="none" stroke="#d2d2d2" stroke-width="4"/><path d="M835 148h22M846 137v22" stroke="#5a5a5a" stroke-width="6"/></g><g transform="translate(195 38) scale(0.15)"><rect x="1006" y="44" width="112" height="116" rx="8" fill="#c08d4e" stroke="#a06e2c" stroke-width="6"/><rect x="1022" y="60" width="82" height="90" fill="#f2f2f2"/><path d="M1034 78h56M1034 94h56M1034 110h56M1034 126h34" stroke="#dadada" stroke-width="6"/><path d="M1104 122v28h-28z" fill="#9a9a9a"/><rect x="1040" y="28" width="46" height="26" rx="6" fill="#9c9c9c" stroke="#7a7a7a" stroke-width="4"/></g><g transform="translate(365 38) scale(0.15)"><g transform="translate(172 92) rotate(-46)"><rect x="-36" y="-15" width="76" height="30" fill="#e5382c" stroke="#a81e14" stroke-width="4"/><path d="M-36 -5h76M-36 6h76" stroke="#f08078" stroke-width="3"/><path d="M-36 -15L-64 0L-36 15Z" fill="#f3d2a8" stroke="#a86a4a" stroke-width="3"/><path d="M-54 -5L-64 0L-54 5Z" fill="#333"/><rect x="40" y="-15" width="14" height="30" rx="5" fill="#f07a70" stroke="#a81e14" stroke-width="3"/></g><path d="M120 145h96" stroke="#f04848" stroke-width="7"/></g><g transform="translate(365 38) scale(0.15)"><rect x="276" y="56" width="124" height="90" rx="3" fill="#0c147e" stroke="#080e5c" stroke-width="5"/><path d="M294 130L386 70V130Z" fill="none" stroke="#eef0ff" stroke-width="6" stroke-dasharray="12 9"/></g><g transform="translate(365 38) scale(0.15)"><circle cx="508" cy="97" r="55" fill="none" stroke="#161616" stroke-width="10"/><path d="M445 158L572 35" stroke="#4a50e0" stroke-width="6"/></g><g transform="translate(365 38) scale(0.15)"><rect x="660" y="45" width="10" height="10" fill="#3c3c3c"/><rect x="660" y="80" width="10" height="10" fill="#3c3c3c"/><rect x="660" y="115" width="10" height="10" fill="#3c3c3c"/><rect x="660" y="150" width="10" height="10" fill="#3c3c3c"/><rect x="695" y="45" width="10" height="10" fill="#3c3c3c"/><rect x="695" y="80" width="10" height="10" fill="#3c3c3c"/><rect x="695" y="115" width="10" height="10" fill="#3c3c3c"/><rect x="695" y="150" width="10" height="10" fill="#3c3c3c"/><rect x="732" y="45" width="10" height="10" fill="#3c3c3c"/><rect x="732" y="80" width="10" height="10" fill="#3c3c3c"/><rect x="732" y="115" width="10" height="10" fill="#3c3c3c"/><rect x="732" y="150" width="10" height="10" fill="#3c3c3c"/><rect x="767" y="45" width="10" height="10" fill="#3c3c3c"/><rect x="767" y="80" width="10" height="10" fill="#3c3c3c"/><rect x="767" y="115" width="10" height="10" fill="#3c3c3c"/><rect x="767" y="150" width="10" height="10" fill="#3c3c3c"/></g><g transform="translate(365 38) scale(0.15)"><path d="M935 115L975 150" stroke="#4e4e4e" stroke-width="17" stroke-linecap="round"/><path d="M937 114L973 146" stroke="#9a9a9a" stroke-width="5" stroke-linecap="round" opacity="0.7"/><circle cx="905" cy="82" r="45" fill="url(#lens)" stroke="#cfd9e6" stroke-width="10"/><path d="M882 82h46M905 59v46" stroke="#fff" stroke-width="13" stroke-linecap="round" fill="none"/></g><g transform="translate(365 38) scale(0.15)"><path d="M1105 113L1145 150" stroke="#4e4e4e" stroke-width="17" stroke-linecap="round"/><path d="M1107 112L1143 146" stroke="#9a9a9a" stroke-width="5" stroke-linecap="round" opacity="0.7"/><circle cx="1075" cy="80" r="45" fill="url(#lens)" stroke="#cfd9e6" stroke-width="10"/><path d="M1052 80h46" stroke="#fff" stroke-width="13" stroke-linecap="round" fill="none"/></g><g transform="translate(530 38) scale(0.15)"><path d="M170 115L210 150" stroke="#4e4e4e" stroke-width="17" stroke-linecap="round"/><path d="M172 114L208 146" stroke="#9a9a9a" stroke-width="5" stroke-linecap="round" opacity="0.7"/><circle cx="140" cy="82" r="45" fill="url(#lens)" stroke="#cfd9e6" stroke-width="10"/><rect x="118" y="60" width="44" height="44" rx="10" fill="none" stroke="#fff" stroke-width="9" stroke-dasharray="22 12" stroke-dashoffset="-6"/></g><g transform="translate(530 38) scale(0.15)"><path d="M340 115L380 150" stroke="#b4b4b4" stroke-width="17" stroke-linecap="round"/><path d="M342 114L378 146" stroke="#9a9a9a" stroke-width="5" stroke-linecap="round" opacity="0.7"/><circle cx="310" cy="82" r="42" fill="url(#lensg)" stroke="#d9d9d9" stroke-width="10"/><rect x="288" y="60" width="44" height="44" fill="#c9c9c9" stroke="#8c8c8c" stroke-width="10" stroke-dasharray="20 12"/></g><g transform="translate(530 38) scale(0.15)"><path d="M510 115L550 150" stroke="#4e4e4e" stroke-width="17" stroke-linecap="round"/><path d="M512 114L548 146" stroke="#9a9a9a" stroke-width="5" stroke-linecap="round" opacity="0.7"/><circle cx="480" cy="82" r="45" fill="url(#lens)" stroke="#cfd9e6" stroke-width="10"/><path d="M452 82L480 60V74H508V90H480V104Z" fill="#fff"/></g><g transform="translate(530 38) scale(0.15)"><rect x="598" y="30" width="122" height="76" fill="#fbfbfb" stroke="#7d9fd6" stroke-width="5"/><path d="M692 128L720 150" stroke="#4e4e4e" stroke-width="17" stroke-linecap="round"/><path d="M694 127L718 146" stroke="#9a9a9a" stroke-width="5" stroke-linecap="round" opacity="0.7"/><circle cx="662" cy="95" r="36" fill="url(#lens)" stroke="#cfd9e6" stroke-width="10"/><path d="M640 108a30 14 0 0 0 44 0" fill="none" stroke="#a9cbf2" stroke-width="6"/></g><g transform="translate(530 38) scale(0.15)"><path d="M862 118L897 150" stroke="#4e4e4e" stroke-width="17" stroke-linecap="round"/><path d="M828 30L883 85L828 140L773 85Z" fill="url(#lens)" stroke="#cfd9e6" stroke-width="8" stroke-linejoin="round"/><path d="M828 44V126M787 85H869" stroke="#fff" stroke-width="8"/><path d="M828 36L842 56H814ZM828 134L842 114H814ZM779 85L799 71V99ZM877 85L857 71V99Z" fill="#fff"/></g></svg>
<div class="b" style="left:4px;top:72px;width:2px;height:22px;background:repeating-linear-gradient(#b4b4b4 0 1px,transparent 1px 3px)"></div>
<div class="b" style="left:11px;top:71.300px;width:32px;height:21.600px;border:2px solid #8a8a8a;border-radius:5.500px;background:linear-gradient(#fdfdfd,#f0f0f0)"></div>
<svg style="left:20.5px;top:74px" width="14" height="17" viewBox="0 0 14 17"><path d="M3.500 2.500v10.500l2.400 -2.300l2 4.200l1.700 -0.800l-2 -4.100l3.400 -0.200z" fill="#fdfdfd" stroke="#8a8a8a" stroke-width="0.9" stroke-linejoin="round"/></svg>
<div class="b" style="left:47px;top:71px;width:1px;height:24px;background:#c6c6c6"></div>
<div class="b" style="left:3px;top:101px;width:70px;height:2px;background:repeating-linear-gradient(90deg,#b4b4b4 0 1px,transparent 1px 3px)"></div>
<div class="btn" style="left:2px;top:107.5px;width:34px;height:34px"></div><svg style="left:2px;top:107.5px" width="34" height="34" viewBox="0 0 34 34"><g fill="none" stroke="#222" stroke-width="1.3" stroke-linecap="round" stroke-linejoin="round" stroke-width="1.4"><path d="M7 10h6M10 7v6M21.5 18.5h6M24.5 15.5v6M7.5 24.5h6M10.5 21.5v6"/></g><path d="M30.5 26v4.5h-4.5z" fill="#111"/></svg>
<div class="btn" style="left:37px;top:107.5px;width:34px;height:34px"></div><svg style="left:37px;top:107.5px" width="34" height="34" viewBox="0 0 34 34"><path d="M5.5 23.5L29.5 12" fill="none" stroke="#222" stroke-width="1.3" stroke-linecap="round" stroke-linejoin="round"/><path d="M30.5 26v4.5h-4.5z" fill="#111"/></svg>
<div class="btn" style="left:2px;top:142.5px;width:34px;height:34px"></div><svg style="left:2px;top:142.5px" width="34" height="34" viewBox="0 0 34 34"><path d="M6.5 26.5C7.5 15 14 8 26.5 7" fill="none" stroke="#222" stroke-width="1.3" stroke-linecap="round" stroke-linejoin="round"/><path d="M30.5 26v4.5h-4.5z" fill="#111"/></svg>
<div class="btn" style="left:37px;top:142.5px;width:34px;height:34px"></div><svg style="left:37px;top:142.5px" width="34" height="34" viewBox="0 0 34 34"><circle cx="16.5" cy="17" r="9.8" fill="none" stroke="#222" stroke-width="1.3" stroke-linecap="round" stroke-linejoin="round"/><path d="M30.5 26v4.5h-4.5z" fill="#111"/></svg>
<div class="btn" style="left:2px;top:177.5px;width:34px;height:34px"></div><svg style="left:2px;top:177.5px" width="34" height="34" viewBox="0 0 34 34"><ellipse cx="0" cy="0" rx="15" ry="6" transform="translate(17 18) rotate(-45)" fill="none" stroke="#222" stroke-width="1.3" stroke-linecap="round" stroke-linejoin="round"/><path d="M30.5 26v4.5h-4.5z" fill="#111"/></svg>
<div class="btn" style="left:37px;top:177.5px;width:34px;height:34px"></div><svg style="left:37px;top:177.5px" width="34" height="34" viewBox="0 0 34 34"><path d="M7 9C4 14 8 31 13 29C18 27 23 8 28 10C32 12 31 25 27 22C22 19 11 3 7 9Z" fill="none" stroke="#222" stroke-width="1.3" stroke-linecap="round" stroke-linejoin="round"/><path d="M30.5 26v4.5h-4.5z" fill="#111"/></svg>
<div class="btn" style="left:2px;top:212.5px;width:34px;height:34px"></div><svg style="left:2px;top:212.5px" width="34" height="34" viewBox="0 0 34 34"><path d="M13 12.5C7 12.5 5.5 21.5 12 21.500H26.700" fill="none" stroke="#222" stroke-width="1.3" stroke-linecap="round" stroke-linejoin="round" stroke-width="1.2"/><path d="M30.5 26v4.5h-4.5z" fill="#111"/></svg>
<div class="btn" style="left:37px;top:212.5px;width:34px;height:34px"></div><svg style="left:37px;top:212.5px" width="34" height="34" viewBox="0 0 34 34"><g fill="none" stroke="#222" stroke-width="1.3" stroke-linecap="round" stroke-linejoin="round"><path d="M8.5 4.5h7l3.5 6l-3.5 6h-7l-3.5 -6z"/><path d="M27 10l5 8.5h-10z"/><rect x="7" y="22" width="14" height="7"/></g><path d="M30.5 26v4.5h-4.5z" fill="#111"/></svg>
<div class="btn" style="left:2px;top:247.5px;width:34px;height:34px"></div><svg style="left:2px;top:247.5px" width="34" height="34" viewBox="0 0 34 34"><defs><pattern id="hp" width="2.4" height="2.4" patternUnits="userSpaceOnUse" patternTransform="rotate(-50)"><rect width="2.4" height="0.8" fill="#555"/></pattern></defs><path d="M6.800 24.500V17.700l7.800 -6.200H27.800V24.500z" fill="url(#hp)" stroke="#222" stroke-width="1.2" stroke-linejoin="round"/><circle cx="20.100" cy="18.800" r="3.2" fill="#f2f2f2" stroke="#222" stroke-width="1.1"/><path d="M30.5 26v4.5h-4.5z" fill="#111"/></svg>
<div class="btn" style="left:2px;top:290.5px;width:34px;height:34px"></div><svg style="left:2px;top:290.5px" width="34" height="34" viewBox="0 0 34 34"><text x="17.300" y="26.700" text-anchor="middle" font-size="28.500" style="font-family:'Liberation Serif',serif" fill="#111">A</text></svg>
<div class="btn" style="left:37px;top:290.5px;width:34px;height:34px"></div><svg style="left:37px;top:290.5px" width="34" height="34" viewBox="0 0 34 34"><g fill="none" stroke="#222" stroke-width="1.3" stroke-linecap="round" stroke-linejoin="round" stroke-width="1.5"><path d="M7.500 9v15.500M26.500 9v15.500M8 12h18.500"/></g><path d="M8 12l4.500 -2.200v4.400zM26 12l-4.500 -2.200v4.400z" fill="#222"/><path d="M30.5 26v4.5h-4.5z" fill="#111"/></svg>
<div class="btn" style="left:2px;top:325.7px;width:34px;height:34px"></div><svg style="left:2px;top:325.7px" width="34" height="34" viewBox="0 0 34 34"><rect x="6.5" y="8.5" width="22" height="17" rx="1.5" fill="#fff" stroke="#111" stroke-width="1.8"/><path d="M9 23l6 -6.5l3.5 3l3.5 -4.5l4.5 5.5v2.5z" fill="#111"/><circle cx="23.5" cy="12.5" r="1.7" fill="#111"/></svg>
<div class="btn" style="left:2px;top:368px;width:34px;height:34px"></div><svg style="left:2px;top:368px" width="34" height="34" viewBox="0 0 34 34"><path d="M5 29V11.500L22 29z" fill="#f4f4f4" stroke="#222" stroke-width="1.4" stroke-linejoin="round"/><path d="M8.500 26v-6l5.500 6z" fill="none" stroke="#222" stroke-width="1.1"/><g transform="translate(15.500 10.500) rotate(40)"><rect x="-7.500" y="-2.400" width="11" height="4.800" fill="#e02a1f" stroke="#8a1a12" stroke-width="0.7"/><path d="M3.500 -2.400l4 2.400l-4 2.400z" fill="#f0c9a0" stroke="#8a5a3a" stroke-width="0.6"/><path d="M6.300 -0.700l1.200 0.700l-1.200 0.700z" fill="#222"/><rect x="-9.500" y="-2.400" width="2.200" height="4.800" fill="#e88" stroke="#8a1a12" stroke-width="0.5"/></g><path d="M27 5v4M27 9l-3 13.500M27 9l3 13.500" fill="none" stroke="#222" stroke-width="1.500" stroke-linecap="round"/><circle cx="27" cy="8.500" r="1.500" fill="#222"/><path d="M30.5 26v4.5h-4.5z" fill="#111"/></svg>
<div class="btn" style="left:37px;top:368px;width:34px;height:34px"></div><svg style="left:37px;top:368px" width="34" height="34" viewBox="0 0 34 34"><rect x="5.5" y="12.5" width="24" height="8" rx="1.5" fill="#fff" stroke="#444" stroke-width="1.3"/><path d="M9 13v3.5M12 13v2.5M15 13v3.5M18 13v2.5M21 13v3.5M24 13v2.5M27 13v3.5" stroke="#444" stroke-width="0.9"/></svg>
<div class="btn" style="left:2px;top:403px;width:34px;height:34px"></div><svg style="left:2px;top:403px" width="34" height="34" viewBox="0 0 34 34"><g fill="none" stroke="#555" stroke-width="1.3"><rect x="7.5" y="7.5" width="16" height="13"/><circle cx="22" cy="20" r="7"/><path d="M6 20.5h17.5" stroke="#777"/></g></svg>
<div class="btn" style="left:37px;top:403px;width:34px;height:34px"></div><svg style="left:37px;top:403px" width="34" height="34" viewBox="0 0 34 34"><path d="M6 16L23 6.5" stroke="#f0535a" stroke-width="1.5" fill="none"/><path d="M15.5 11.5v13l3 -2.8l2.2 5l2 -0.9l-2.2 -4.9l4.3 -0.3z" fill="#e8e8e8" stroke="#666" stroke-width="1" stroke-linejoin="round"/><path d="M30.5 26v4.5h-4.5z" fill="#111"/></svg>
<div class="btn" style="left:2px;top:445.5px;width:34px;height:34px"></div><svg style="left:2px;top:445.5px" width="34" height="34" viewBox="0 0 34 34"><g fill="none" stroke="#222" stroke-width="1.3" stroke-linecap="round" stroke-linejoin="round" stroke-width="1.4"><path d="M7.5 14.5L21 7.5l6.5 5.5v9.5L15 29.5l-7.5 -5.5zM7.500 14.5L15 19.5l12.5 -6.5M15 19.500v10"/></g><path d="M30.5 26v4.5h-4.5z" fill="#111"/></svg>
<div class="b" style="left:1175px;top:100px;width:24px;height:2px;background:repeating-linear-gradient(90deg,#b4b4b4 0 1px,transparent 1px 3px)"></div>
<div class="b" style="left:1174px;top:106px;width:25.300px;height:24.6px;background:linear-gradient(#8f8f8f,#cfcfcf 45%,#ececec);border:1px solid #6f6f6f;"></div><svg style="left:1174px;top:106px" width="25.3" height="24.6" viewBox="0 0 25.3 24.6"><rect x="3.500" y="3.500" width="18.500" height="18" fill="#fdfdfd" stroke="#7a7a7a" stroke-width="1"/><rect x="6.300" y="4.300" width="15" height="2.600" fill="#0a0a0a"/><rect x="4.300" y="4.300" width="1.800" height="2.400" fill="#fff" stroke="#555" stroke-width="0.500"/><path d="M8.500 12l5 -3v8l-5 3z" fill="#9a9a9a" stroke="#666" stroke-width="0.700"/><path d="M10.500 12.500l5.500 -3.500v8l-5.500 3.500z" fill="#f0a0a0" stroke="#8a6a6a" stroke-width="0.700"/></svg>
<div class="b" style="left:1174px;top:133px;width:25.300px;height:20.5px;background:none;border:none;"></div><svg style="left:1174px;top:133px" width="25.3" height="20.5" viewBox="0 0 25.3 20.5"><rect x="3.500" y="3.500" width="18.500" height="17" fill="#fdfdfd" stroke="#7a7a7a" stroke-width="1"/><rect x="6.300" y="4.300" width="15" height="2.600" fill="#0a0a0a"/><rect x="4.300" y="4.300" width="1.800" height="2.400" fill="#fff" stroke="#555" stroke-width="0.500"/><rect x="8" y="10" width="6" height="5" fill="#f3e6a0" stroke="#a89a40" stroke-width="0.800"/><circle cx="14" cy="14.500" r="3" fill="#f3e6a0" fill-opacity="0.6" stroke="#a89a40" stroke-width="0.800"/></svg>
<div class="b" style="left:1177px;top:158.300px;width:21px;height:1px;background:#c4c4c4"></div>
<div class="b" style="left:1174px;top:162px;width:25.300px;height:25px;background:linear-gradient(#8f8f8f,#cfcfcf 45%,#ececec);border:1px solid #6f6f6f;"></div><svg style="left:1174px;top:162px" width="25.3" height="25" viewBox="0 0 25.3 25"><rect x="3.500" y="3.500" width="18.500" height="18.5" fill="#fdfdfd" stroke="#7a7a7a" stroke-width="1"/><rect x="6.300" y="4.300" width="15" height="2.600" fill="#0a0a0a"/><rect x="4.300" y="4.300" width="1.800" height="2.400" fill="#fff" stroke="#555" stroke-width="0.500"/><path d="M6.500 10.800h2.500M6.500 14.500h2.500M6.500 18.200h2.500" stroke="#111" stroke-width="2"/><g fill="#e8e8e8" stroke="#8a8a8a" stroke-width="0.700"><rect x="10.500" y="9.500" width="9" height="2.500" rx="1"/><rect x="10.500" y="13.200" width="9" height="2.500" rx="1"/><rect x="10.500" y="16.900" width="9" height="2.500" rx="1"/></g></svg>
<div class="b" style="left:1177px;top:189.300px;width:21px;height:1px;background:#c4c4c4"></div>
<div class="b" style="left:1174px;top:192.7px;width:25.300px;height:25.7px;background:linear-gradient(#8f8f8f,#cfcfcf 45%,#ececec);border:1px solid #6f6f6f;"></div><svg style="left:1174px;top:192.7px" width="25.3" height="25.7" viewBox="0 0 25.3 25.7"><rect x="3.500" y="3.500" width="18.500" height="19.5" fill="#fdfdfd" stroke="#7a7a7a" stroke-width="1"/><rect x="6.300" y="4.300" width="15" height="2.600" fill="#0a0a0a"/><rect x="4.300" y="4.300" width="1.800" height="2.400" fill="#fff" stroke="#555" stroke-width="0.500"/><path d="M6 10.500h9M6 12.500h10M6 14.500h8M6 16.500h10" stroke="#b5b5b5" stroke-width="0.900" stroke-dasharray="2.500 0.800"/><rect x="5.500" y="19.500" width="14.500" height="2.200" fill="#e4e4e4" stroke="#777" stroke-width="0.600"/></svg>
</body></html>
